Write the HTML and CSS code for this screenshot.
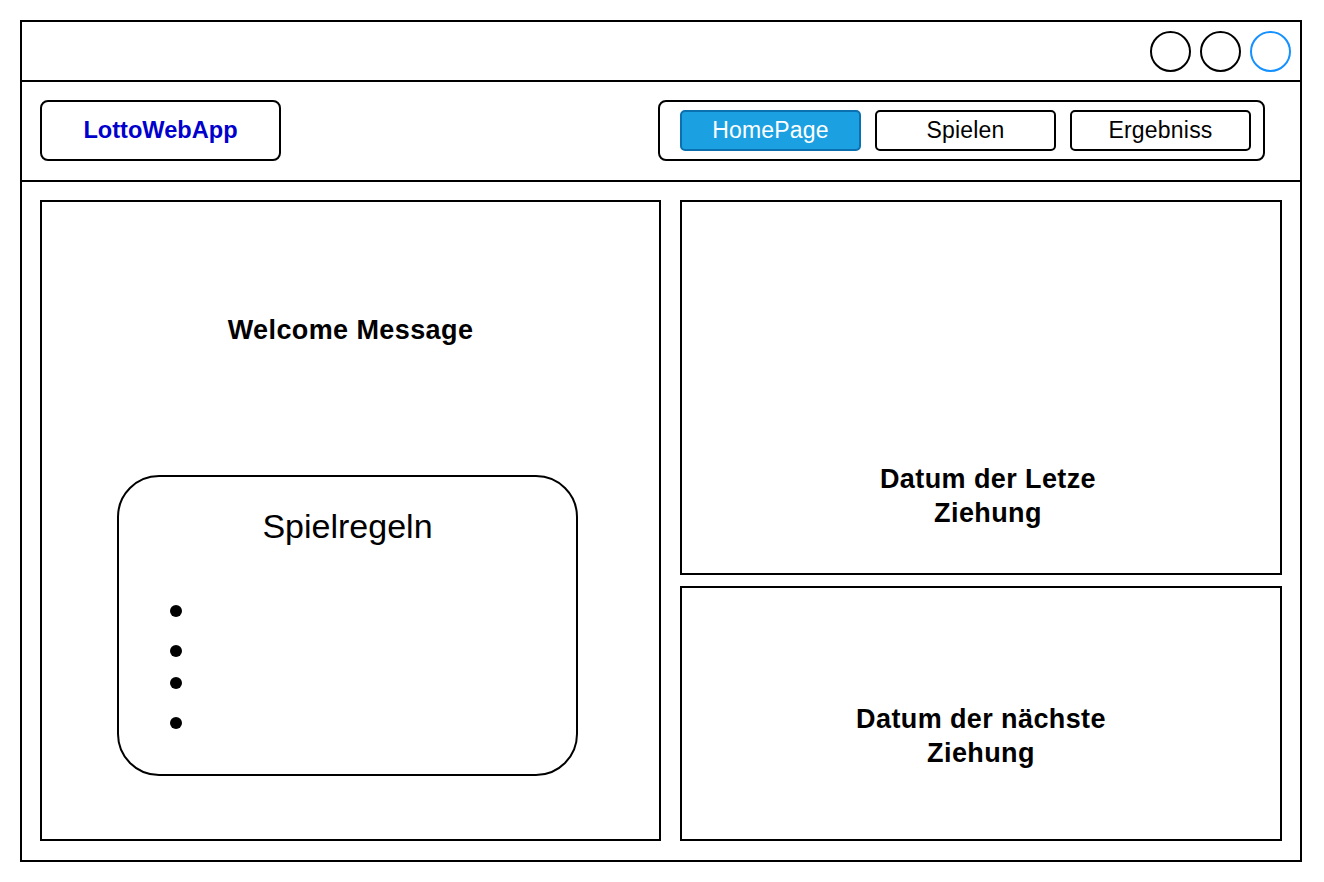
FILE: index.html
```html
<!DOCTYPE html>
<html lang="de">
<head>
<meta charset="utf-8">
<title>LottoWebApp</title>
<link rel="stylesheet" href="styles.css">
</head>
<body>
<div class="window">
  <div class="titlebar">
    <span class="dot"></span>
    <span class="dot"></span>
    <span class="dot dot-blue"></span>
  </div>
  <header class="header">
    <div class="logo">LottoWebApp</div>
    <nav class="nav">
      <a class="btn btn-active">HomePage</a>
      <a class="btn">Spielen</a>
      <a class="btn">Ergebniss</a>
    </nav>
  </header>
  <main class="content">
    <section class="panel panel-left">
      <h2 class="welcome">Welcome Message</h2>
      <div class="rules">
        <div class="rules-title">Spielregeln</div>
        <ul class="rules-list">
          <li></li>
          <li></li>
          <li class="tight"></li>
          <li></li>
        </ul>
      </div>
    </section>
    <div class="right-col">
      <section class="panel panel-top">
        <p class="date-text date-last">Datum der Letze<br>Ziehung</p>
      </section>
      <section class="panel panel-bottom">
        <p class="date-text date-next">Datum der nächste<br>Ziehung</p>
      </section>
    </div>
  </main>
</div>
</body>
</html>
```
FILE: styles.css
```css
* { box-sizing: border-box; }
html, body { margin: 0; padding: 0; background: #fff; }
body {
  font-family: "Liberation Sans", Arial, Helvetica, sans-serif;
  color: #000;
  padding: 20px 0 0 20px;
}
.window {
  width: 1282px;
  height: 842px;
  border: 2px solid #000;
  display: flex;
  flex-direction: column;
}
.titlebar {
  height: 60px;
  border-bottom: 2px solid #000;
  display: flex;
  justify-content: flex-end;
  align-items: center;
  gap: 9px;
  padding: 0 9px 0 0;
}
.dot {
  width: 41px;
  height: 41px;
  border: 2px solid #000;
  border-radius: 50%;
}
.dot-blue { border-color: #1490ff; }
.header {
  height: 100px;
  border-bottom: 2px solid #000;
  display: flex;
  align-items: flex-start;
  justify-content: space-between;
  padding: 18px 35px 0 18px;
}
.logo {
  width: 241px;
  height: 61px;
  border: 2px solid #000;
  border-radius: 8px;
  display: flex;
  align-items: center;
  justify-content: center;
  color: #0000cc;
  font-weight: bold;
  font-size: 23.6px;
}
.nav {
  height: 61px;
  border: 2px solid #000;
  border-radius: 8px;
  display: flex;
  align-items: center;
  gap: 14px;
  padding: 0 12px 0 20px;
}
.btn {
  width: 181px;
  height: 41px;
  border: 2px solid #000;
  border-radius: 5px;
  display: flex;
  align-items: center;
  justify-content: center;
  font-size: 23px;
  letter-spacing: 0.2px;
  color: #000;
}
.btn-active {
  background: #1ba1e2;
  border-color: #0a70b0;
  color: #fff;
}
.content {
  flex: 1;
  display: flex;
  gap: 19px;
  padding: 18px 18px 19px 18px;
}
.panel {
  border: 2px solid #000;
}
.panel-left {
  width: 621px;
  display: flex;
  flex-direction: column;
}
.welcome {
  margin: 0;
  padding-top: 112px;
  text-align: center;
  font-size: 27px;
  letter-spacing: 0.4px;
  font-weight: bold;
  line-height: 32px;
}
.rules {
  margin: 129px 0 0 75px;
  width: 461px;
  height: 301px;
  border: 2px solid #000;
  border-radius: 42px;
  padding-top: 28px;
}
.rules-title {
  text-align: center;
  font-size: 34px;
  line-height: 42px;
}
.rules-list {
  list-style: none;
  margin: 0;
  padding: 0 0 0 51px;
  margin-top: 58px;
}
.rules-list li {
  height: 40px;
  display: flex;
  align-items: flex-start;
}
.rules-list li.tight { height: 32px; margin-top: -8px; }
.rules-list li::before {
  content: "";
  width: 12px;
  height: 12px;
  border-radius: 50%;
  background: #000;
}
.rules-list li.tight + li { margin-top: 8px; }
.right-col {
  flex: 1;
  display: flex;
  flex-direction: column;
  gap: 11px;
}
.panel-top {
  height: 375px;
  display: flex;
  justify-content: center;
}
.panel-bottom {
  flex: 1;
  display: flex;
  justify-content: center;
}
.date-text {
  margin: 0;
  text-align: center;
  font-size: 27px;
  letter-spacing: 0.4px;
  font-weight: bold;
  line-height: 34px;
}
.date-last { padding: 260px 0 0 14px; }
.date-next { padding: 114px 0 0 0; }
```
